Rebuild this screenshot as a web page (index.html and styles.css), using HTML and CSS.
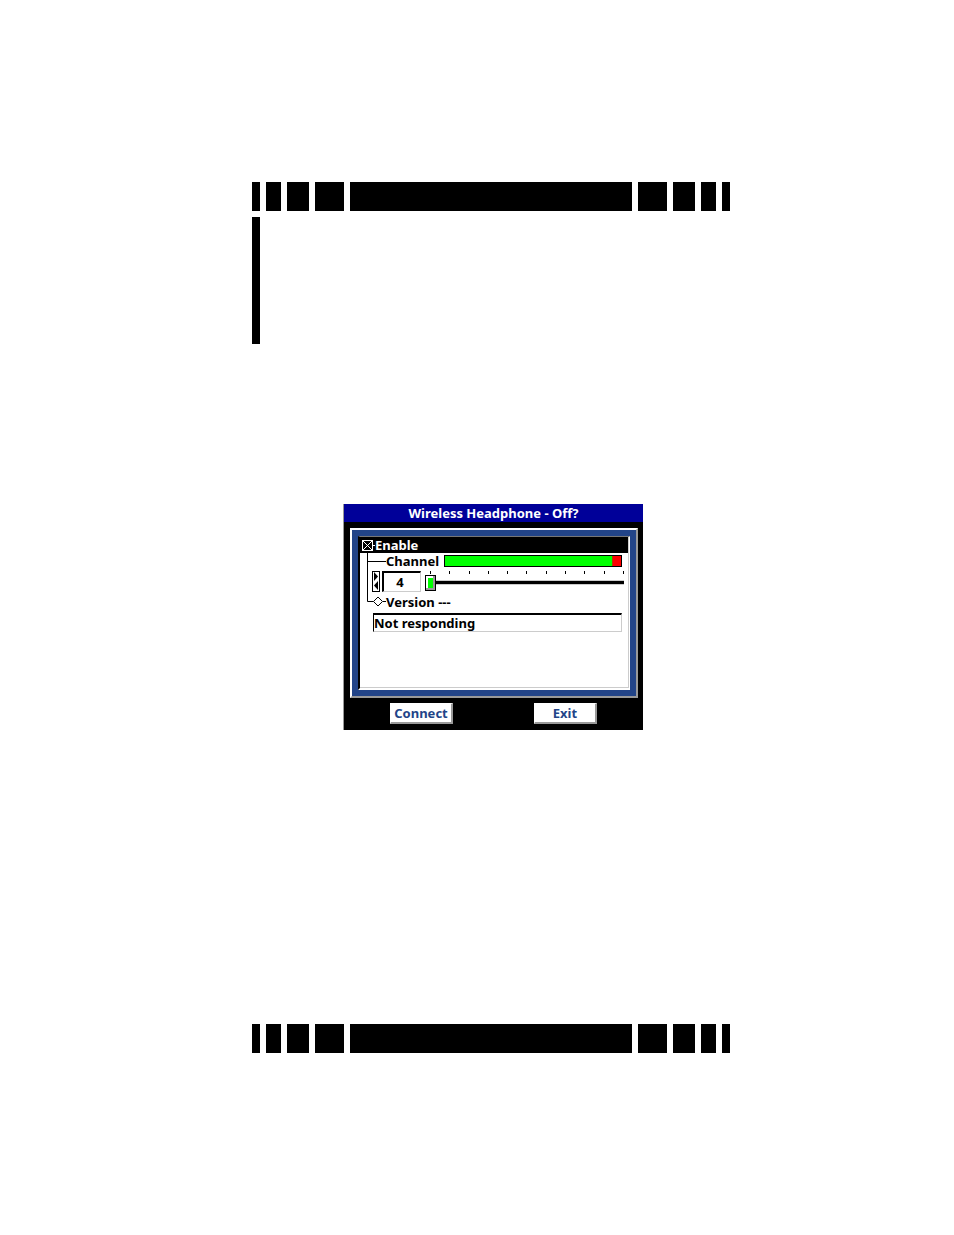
FILE: index.html
```html
<!DOCTYPE html>
<html lang="en">
<head>
    <meta charset="UTF-8">
    <meta name="viewport" content="width=device-width, initial-scale=1.0">
    <title>Wireless Headphone</title>
    <link rel="stylesheet" href="styles.css">
</head>
<body>
    <div class="page">
        <!-- Top band -->
        <div class="band">
            <span class="w1"></span><span class="w2"></span><span class="w3"></span><span class="w4"></span>
            <span class="fill"></span>
            <span class="w4"></span><span class="w3"></span><span class="w2"></span><span class="w1"></span>
        </div>
        <div class="side-bar"></div>

        <!-- Device screen -->
        <main class="device">
            <h1>Wireless Headphone - Off?</h1>
            <div class="frame">
                <div class="panel">
                    <label class="enable">
                        <input type="checkbox" checked>
                        <span class="dash"></span>
                        <span>Enable</span>
                    </label>
                    <div class="branch">
                        <div class="row channel-row">
                            <span class="line"></span>
                            <label for="channel">Channel</label>
                            <div class="level"><span class="ok"></span><span class="over"></span></div>
                        </div>
                        <div class="row control-row">
                            <div class="spinner">
                                <button type="button" aria-label="Next channel">
                                    <svg viewBox="0 0 6 9" width="6" height="9"><path d="M1 0v9l4-4.500z"/></svg>
                                </button>
                                <button type="button" aria-label="Previous channel">
                                    <svg viewBox="0 0 6 9" width="6" height="9"><path d="M5 0v9l-4-4.500z"/></svg>
                                </button>
                            </div>
                            <input type="text" id="channel" class="number" value="4">
                            <div class="slider">
                                <div class="ticks">
                                    <i></i><i></i><i></i><i></i><i></i><i></i><i></i><i></i><i></i><i></i><i></i>
                                </div>
                                <input type="range" min="0" max="10" value="0" aria-label="Channel slider">
                            </div>
                        </div>
                    </div>
                    <div class="row version-row">
                        <svg class="node" viewBox="0 0 19 18" width="19" height="18">
                            <path d="M0.500 0v8.500h6M16 8.500h3M6.500 8.500l4.500-4.500 4.500 4.500-4.500 4.500z"/>
                        </svg>
                        <label for="status">Version ---</label>
                    </div>
                    <input type="text" id="status" class="status" value="Not responding" readonly>
                </div>
            </div>
            <div class="actions">
                <button type="button">Connect</button>
                <button type="button">Exit</button>
            </div>
        </main>

        <!-- Bottom band -->
        <div class="band">
            <span class="w1"></span><span class="w2"></span><span class="w3"></span><span class="w4"></span>
            <span class="fill"></span>
            <span class="w4"></span><span class="w3"></span><span class="w2"></span><span class="w1"></span>
        </div>
    </div>
</body>
</html>
```
FILE: styles.css
```css
* {
    margin: 0;
    padding: 0;
    box-sizing: border-box;
}

body {
    background-color: #fff;
    color: #000;
    font-family: "Noto Sans", "Open Sans", sans-serif;
    font-size: 13px;
    font-weight: 700;
    line-height: 16px;
}

input,
button {
    font: inherit;
    border-radius: 0;
    outline: none;
}

.page {
    padding: 182px 224px 182px 252px;
}

/* Bands */
.band {
    display: flex;
    gap: 6px;
    height: 29px;
}

.band span {
    background-color: #000;
}

.w1 {
    width: 8px;
}

.w2 {
    width: 15px;
}

.w3 {
    width: 22px;
}

.w4 {
    width: 29px;
}

.fill {
    flex: 1;
}

.side-bar {
    width: 8px;
    height: 127px;
    margin-top: 6px;
    background-color: #000;
}

/* Device */
.device {
    max-width: 300px;
    margin: 160px auto 294px 91px;
    background-color: #000;
    border-left: 1px solid #999;
}

.device h1 {
    background-color: #000099;
    color: #fff;
    font-size: 13px;
    font-weight: 700;
    line-height: 18px;
    text-align: center;
}

.frame {
    margin: 6px 5px 0 6px;
    padding: 6px;
    background-color: #224488;
    border: 2px solid #fff;
    border-right-color: #999;
    border-bottom-color: #999;
}

.panel {
    height: 154px;
    background-color: #fff;
    border-top: 1px solid #777;
    border-left: 2px solid #000;
    border-right: 1px solid #fff;
    border-bottom: 2px solid #fff;
    box-shadow: inset -1px -1px 0 #ccc;
}

.row {
    display: flex;
    align-items: center;
}

.enable {
    display: flex;
    align-items: center;
    height: 16px;
    margin-right: 1px;
    padding-left: 2px;
    background-color: #000;
    color: #fff;
}

.enable input {
    appearance: none;
    width: 11px;
    height: 11px;
    border: 1px solid #fff;
}

.enable input:checked {
    background: linear-gradient(45deg, transparent 46%, #fff 46%, #fff 54%, transparent 54%),
        linear-gradient(-45deg, transparent 46%, #fff 46%, #fff 54%, transparent 54%);
}

.dash {
    width: 2px;
    height: 1px;
    background-color: #fff;
}

/* Tree */
.branch {
    margin-left: 7px;
    border-left: 1px solid #000;
}

.channel-row {
    height: 16px;
}

.line {
    width: 18px;
    height: 1px;
    background-color: #000;
}

.level {
    display: flex;
    flex: 1;
    height: 12px;
    margin: 0 7px 0 5px;
    border: 1px solid #000;
}

.ok {
    flex: 1;
    background-color: #00ff00;
}

.over {
    width: 9px;
    background-color: #ff0000;
    border-left: 1px solid #aa4400;
}

.control-row {
    height: 24px;
    padding: 0 5px 0 4px;
}

.spinner {
    display: flex;
    flex-direction: column;
    width: 8px;
    height: 21px;
    border: 1px solid #000;
}

.spinner button {
    display: flex;
    flex: 1;
    align-items: center;
    background-color: #fff;
    border: none;
}

.number {
    width: 39px;
    height: 21px;
    margin: 0 4px 0 2px;
    padding-right: 4px;
    background-color: #fff;
    border: 2px solid #000;
    border-right: 1px solid #ccc;
    border-bottom: 1px solid #ccc;
    text-align: center;
}

.slider {
    flex: 1;
}

.ticks {
    display: flex;
    justify-content: space-between;
    padding-left: 5px;
}

.ticks i {
    width: 1px;
    height: 3px;
    background-color: #000;
}

.slider input {
    display: block;
    appearance: none;
    width: 100%;
    height: 18px;
    background-color: transparent;
}

.slider input::-webkit-slider-runnable-track {
    height: 16px;
    background: linear-gradient(#ccc 1px, #000 1px, #000 4px, #ccc 4px) 0 5px / 100% 5px no-repeat;
}

.slider input::-webkit-slider-thumb {
    appearance: none;
    width: 11px;
    height: 16px;
    background-color: #00ff00;
    border: 1px solid #000;
    box-shadow: inset -2px -2px 0 #999, inset 2px 2px 0 #fff;
}

.version-row {
    height: 18px;
    margin-left: 7px;
}

.node {
    fill: #fff;
    stroke: #000;
    stroke-width: 1;
}

.status {
    display: block;
    width: 249px;
    height: 19px;
    margin: 2px 0 0 13px;
    background-color: #fff;
    border: 2px solid #000;
    border-left-width: 1px;
    border-right: 1px solid #ccc;
    border-bottom: 1px solid #ccc;
}

/* Buttons */
.actions {
    display: flex;
    justify-content: space-between;
    padding: 5px 46px 6px;
}

.actions button {
    width: 63px;
    height: 21px;
    background-color: #fff;
    border: 1px solid #fff;
    border-right: 2px solid #999;
    border-bottom: 2px solid #999;
    color: #224488;
    line-height: 16px;
}
```
